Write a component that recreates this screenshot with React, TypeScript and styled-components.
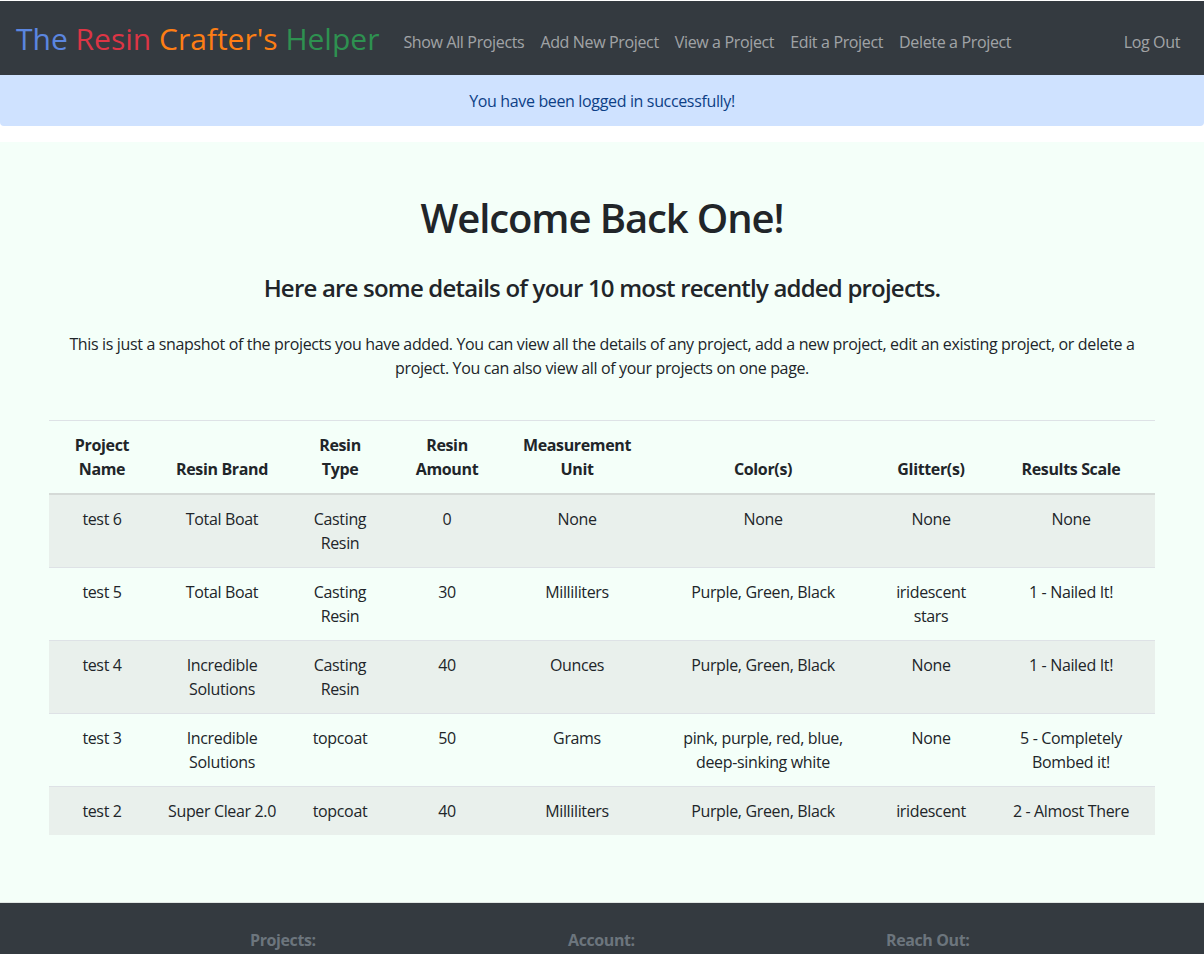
import React from "react";
import styled, { createGlobalStyle } from "styled-components";

const GlobalStyle = createGlobalStyle`
  html, body { margin: 0; padding: 0; }
  body {
    font-family: "Open Sans", "Noto Sans", "Liberation Sans", sans-serif;
    font-size: 16px;
    line-height: 1.5;
    letter-spacing: -0.35px;
    color: #212529;
    background: #ffffff;
  }
  * { box-sizing: border-box; }
`;

const Page = styled.div`
  display: flex;
  flex-direction: column;
  padding-top: 1px;
`;

const NavBar = styled.nav`
  height: 74px;
  background: #343a40;
  display: flex;
  align-items: center;
  padding: 8px 24px 0 16px;
`;

const Brand = styled.a`
  font-size: 30px;
  line-height: 1;
  margin-right: 16px;
  white-space: nowrap;
  text-decoration: none;
  letter-spacing: 0;
  margin-top: -6px;
`;

const BrandWord = styled.span<{ $color: string }>`
  color: ${(p) => p.$color};
`;

const NavLinks = styled.div`
  display: flex;
  align-items: center;
  flex: 1;
`;

const NavLink = styled.a`
  color: rgba(255, 255, 255, 0.55);
  font-size: 16px;
  padding: 8px 8px;
  text-decoration: none;
  white-space: nowrap;
  &:last-child { margin-left: auto; padding-right: 0; }
`;

const Alert = styled.div`
  background: #cfe2ff;
  color: #0d3f86;
  text-align: center;
  height: 51px;
  display: flex;
  align-items: center;
  justify-content: center;
  border-radius: 0 0 4px 4px;
  font-size: 16px;
  margin-bottom: 16px;
`;

const Main = styled.main`
  background: #f4fff9;
  height: 760px;
  padding-top: 52px;
  display: flex;
  flex-direction: column;
  align-items: center;
`;

const Content = styled.div`
  width: 1106px;
  display: flex;
  flex-direction: column;
  align-items: center;
  text-align: center;
`;

const Title = styled.h1`
  font-size: 40px;
  font-weight: 600;
  line-height: 48px;
  letter-spacing: -1.1px;
  margin: 0 0 31px;
`;

const Subtitle = styled.h4`
  font-size: 24px;
  font-weight: 600;
  line-height: 29px;
  letter-spacing: -0.8px;
  margin: 0 0 30px;
`;

const Intro = styled.p`
  margin: 0 0 40px;
  padding: 0 20px;
  font-size: 16px;
  line-height: 24px;
`;

const Table = styled.table`
  width: 1106px;
  border-collapse: collapse;
  table-layout: fixed;
  border-top: 1px solid #dee2e6;
`;

const HeadCell = styled.th`
  padding: 12px 12px;
  font-weight: 700;
  line-height: 24px;
  vertical-align: bottom;
  text-align: center;
  border-bottom: 2px solid #d5dad7;
`;

const Row = styled.tr<{ $striped: boolean }>`
  background: ${(p) => (p.$striped ? "#e9f0ec" : "transparent")};
  border-bottom: 1px solid #dee2e6;
  &:last-child { border-bottom: none; }
`;

const Cell = styled.td`
  padding: 12px 12px;
  line-height: 24px;
  vertical-align: top;
  text-align: center;
`;

const Footer = styled.footer`
  background: #343a40;
  height: 52px;
  border-top: 1px solid #e0e6e3;
  display: grid;
  grid-template-columns: repeat(3, 318px);
  padding-left: 250px;
  padding-top: 25px;
`;

const FooterHeading = styled.h6`
  margin: 0;
  font-size: 16px;
  font-weight: 700;
  line-height: 24px;
  color: #6c757d;
  letter-spacing: -0.4px;
`;

const widths = [106, 134, 102, 112, 148, 224, 112, 168];
const headers = [
  "Project Name",
  "Resin Brand",
  "Resin Type",
  "Resin Amount",
  "Measurement Unit",
  "Color(s)",
  "Glitter(s)",
  "Results Scale",
];

const rows = [
  ["test 6", "Total Boat", "Casting Resin", "0", "None", "None", "None", "None"],
  ["test 5", "Total Boat", "Casting Resin", "30", "Milliliters", "Purple, Green, Black", "iridescent stars", "1 - Nailed It!"],
  ["test 4", "Incredible Solutions", "Casting Resin", "40", "Ounces", "Purple, Green, Black", "None", "1 - Nailed It!"],
  ["test 3", "Incredible Solutions", "topcoat", "50", "Grams", "pink, purple, red, blue, deep-sinking white", "None", "5 - Completely Bombed it!"],
  ["test 2", "Super Clear 2.0", "topcoat", "40", "Milliliters", "Purple, Green, Black", "iridescent", "2 - Almost There"],
];

export default function App() {
  return (
    <>
      <GlobalStyle />
      <Page>
        <NavBar>
          <Brand href="#">
            <BrandWord $color="#5b86e0">The </BrandWord>
            <BrandWord $color="#dc3545">Resin </BrandWord>
            <BrandWord $color="#fd7e14">Crafter's </BrandWord>
            <BrandWord $color="#2e9150">Helper</BrandWord>
          </Brand>
          <NavLinks>
            <NavLink href="#">Show All Projects</NavLink>
            <NavLink href="#">Add New Project</NavLink>
            <NavLink href="#">View a Project</NavLink>
            <NavLink href="#">Edit a Project</NavLink>
            <NavLink href="#">Delete a Project</NavLink>
            <NavLink href="#">Log Out</NavLink>
          </NavLinks>
        </NavBar>
        <Alert>You have been logged in successfully!</Alert>
        <Main>
          <Content>
            <Title>Welcome Back One!</Title>
            <Subtitle>Here are some details of your 10 most recently added projects.</Subtitle>
            <Intro>
              This is just a snapshot of the projects you have added. You can view all the details of any
              project, add a new project, edit an existing project, or delete a project. You can also view
              all of your projects on one page.
            </Intro>
            <Table>
              <colgroup>
                {widths.map((w, i) => (
                  <col key={i} style={{ width: w }} />
                ))}
              </colgroup>
              <thead>
                <tr>
                  {headers.map((h) => (
                    <HeadCell key={h}>{h}</HeadCell>
                  ))}
                </tr>
              </thead>
              <tbody>
                {rows.map((r, i) => (
                  <Row key={i} $striped={i % 2 === 0}>
                    {r.map((c, j) => (
                      <Cell key={j}>{c}</Cell>
                    ))}
                  </Row>
                ))}
              </tbody>
            </Table>
          </Content>
        </Main>
        <Footer>
          <FooterHeading>Projects:</FooterHeading>
          <FooterHeading>Account:</FooterHeading>
          <FooterHeading>Reach Out:</FooterHeading>
        </Footer>
      </Page>
    </>
  );
}
